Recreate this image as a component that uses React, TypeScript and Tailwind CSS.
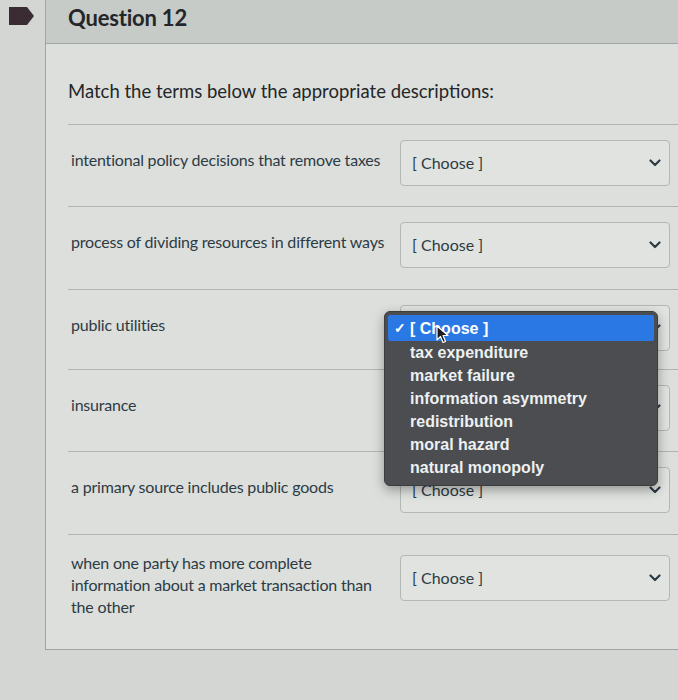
import React from "react";

const rows = [
  { text: "intentional policy decisions that remove taxes", h: "h-[82px]", narrow: false },
  { text: "process of dividing resources in different ways", h: "h-[83px]", narrow: false },
  { text: "public utilities", h: "h-[80px]", narrow: false },
  { text: "insurance", h: "h-[82px]", narrow: false },
  { text: "a primary source includes public goods", h: "h-[83px]", narrow: false },
  { text: "when one party has more complete information about a market transaction than the other", h: "h-[113px]", narrow: true },
];

const options = [
  "tax expenditure",
  "market failure",
  "information asymmetry",
  "redistribution",
  "moral hazard",
  "natural monopoly",
];

function Chevron() {
  return (
    <svg width="12" height="8" viewBox="0 0 12 8" className="shrink-0">
      <path d="M1.5 1.5 L6 6 L10.5 1.5" fill="none" stroke="#2d3b45" strokeWidth="2.2" strokeLinecap="round" strokeLinejoin="round" />
    </svg>
  );
}

function Select({ low }: { low?: boolean }) {
  return (
    <div className={`flex h-[46px] w-[270px] shrink-0 items-center justify-between rounded-[4px] border border-[#b3b8b5] bg-[#e0e3df] pl-[11px] pr-[8px] text-[16px] text-[#2d3b45] ${low ? "mt-[5px]" : ""}`}>
      <span>[ Choose ]</span>
      <Chevron />
    </div>
  );
}

export default function App() {
  return (
    <div className="flex h-[700px] w-[678px] overflow-hidden bg-[#d3d6d2] font-['Lato',sans-serif] text-[#2d3b45]">
      <div className="w-[45px] shrink-0 pl-[9px] pt-[7px]">
        <svg width="25" height="18" viewBox="0 0 25 18">
          <path d="M0 0 H18 L25 9 L18 18 H0 Z" fill="#3b2c33" />
        </svg>
      </div>

      <div className="relative h-[650px] flex-1 border-b border-l border-[#9fa5a2] bg-[#dcdfdb]">
        <div className="flex h-[44px] items-center border-b border-[#9fa5a2] bg-[#c6cbc8] pb-[8px] pl-[22px]">
          <h2 className="text-[22px] font-bold tracking-[-0.2px] text-[#24262a]">Question 12</h2>
        </div>

        <div className="pl-[22px] pt-[34px]">
          <p className="text-[18.5px] leading-[26px] text-[#24262a]">Match the terms below the appropriate descriptions:</p>

          <div className="mt-[20px]">
            {rows.map((r) => (
              <div key={r.text} className={`flex items-start border-t border-[#b0b5b2] pt-[15px] ${r.h}`}>
                <div className={`w-[332px] shrink-0 pl-[3px] pr-[2px] text-[16px] leading-[22px] tracking-[-0.2px] text-[#2d3b45] ${r.narrow ? "pt-[2px]" : "pt-[9px]"}`}>
                  <p className={r.narrow ? "max-w-[316px]" : ""}>{r.text}</p>
                </div>
                <Select low={r.narrow} />
              </div>
            ))}
          </div>
        </div>

        <div className="absolute left-[338px] top-[311px] w-[274px] rounded-[6px] border border-[#3a3c3e] bg-[#4b4d50] px-[3px] pb-[6px] pt-[3px] font-['Liberation_Sans',sans-serif] text-[16px] font-bold leading-[23px] text-[#eef0f2] shadow-[0_4px_12px_rgba(0,0,0,0.35)]">
          <div className="relative flex h-[26px] items-center rounded-[2px] bg-[#2a78e4] text-white">
            <span className="w-[22px] pl-[6px] text-[14px]">✓</span>
            <span>[ Choose ]</span>
            <svg width="14" height="20" viewBox="0 0 14 20" className="absolute left-[48px] top-[10px]">
              <path d="M1 1 L1 15 L4.5 11.5 L7 17.5 L9.5 16.5 L7 10.5 L12 10.5 Z" fill="#1b1b1b" stroke="#ffffff" strokeWidth="1.2" strokeLinejoin="round" />
            </svg>
          </div>
          {options.map((o) => (
            <div key={o} className="pl-[22px]">
              {o}
            </div>
          ))}
        </div>
      </div>
    </div>
  );
}
